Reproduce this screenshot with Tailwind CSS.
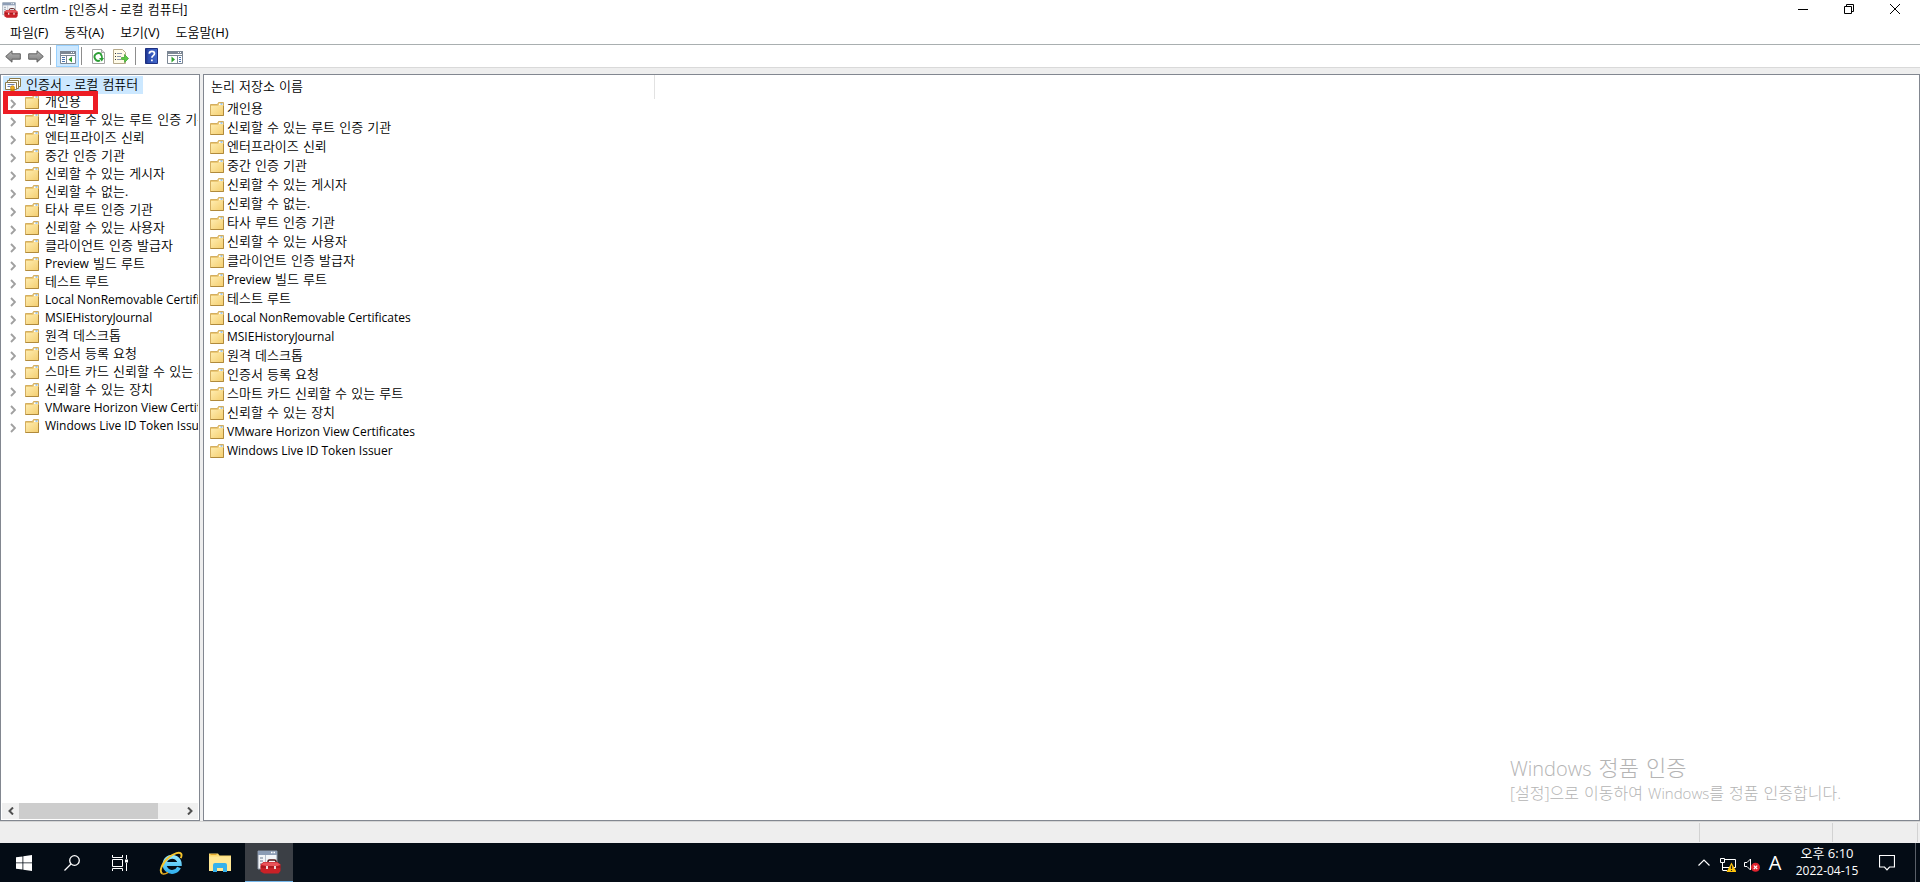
<!DOCTYPE html>
<html lang="ko">
<head>
<meta charset="utf-8">
<title>certlm - [인증서 - 로컬 컴퓨터]</title>
<script src="https://cdn.jsdelivr.net/npm/@tailwindcss/browser@4"></script>
</head>
<body class="flex h-screen flex-col overflow-hidden bg-white font-['DejaVu_Sans','Noto_Sans_CJK_KR',sans-serif] text-[13px] leading-[18px] font-[350] text-black">

<svg class="absolute size-0" aria-hidden="true">
  <defs>
    <linearGradient id="fold" x1="0" y1="0" x2="1" y2="1"><stop offset="0" stop-color="#ffedb0"/><stop offset="1" stop-color="#f4cf72"/></linearGradient>
    <linearGradient id="arrow" x1="0" y1="0" x2="0" y2="1"><stop offset="0" stop-color="#b5b5b5"/><stop offset="1" stop-color="#7d7d7d"/></linearGradient>
    <linearGradient id="ie" x1="0" y1="0" x2="0" y2="1"><stop offset="0" stop-color="#8fe6ff"/><stop offset="1" stop-color="#36b4f0"/></linearGradient>
    <linearGradient id="helpbg" x1="0" y1="0" x2="1" y2="0"><stop offset="0" stop-color="#1c2f86"/><stop offset=".25" stop-color="#2d4db0"/><stop offset="1" stop-color="#4268cc"/></linearGradient>
  </defs>
  <symbol id="folder" viewBox="0 0 14 14">
    <path d="M.5 2.500h7l1-2h5v13H.5z" fill="#ecc975" stroke="#d3ae60"/>
    <path d="M9 1.500h4v1.500H9z" fill="#fff"/><path d="M10.500 1.500h2v1h-2z" fill="#4f9be0"/>
    <path d="M1 4h7l1-1h4v10H1z" fill="url(#fold)"/>
    <path d="M.5 13.500h13V4" fill="none" stroke="#b08a3c"/>
  </symbol>
  <symbol id="chev" viewBox="0 0 6 10"><path d="M1 1l4 4-4 4" fill="none" stroke="#a0a0a0" stroke-width="1.900"/></symbol>
  <symbol id="console" viewBox="0 0 24 24">
    <path d="M1 1h19v18H1z" fill="#f3f5f8" stroke="#8b95a5"/>
    <path d="M1 1h19v4H1z" fill="#8d9db5"/><path d="M14 2.500h1.500M16.500 2.500H18" stroke="#fff" stroke-width="1.500"/>
    <path d="M3 8h3M3 11h3M3 14h3" stroke="#6f7c90"/><path d="M8.500 5v14" stroke="#b8c0cc"/>
    <path d="M11 13v-1.500q0-1.500 1.500-1.500h5q1.500 0 1.500 1.500V13" fill="none" stroke="#4d1111" stroke-width="1.500"/>
    <path d="M3.500 14.500l3-2.500h14l3 2.500v6.500l-2 2.500H7l-3.500-2z" fill="#c92127"/>
    <path d="M4 14.500l3-2h13l3.500 2-3 1.500H9z" fill="#e8545a"/>
    <path d="M3.500 17h20" stroke="#8e1318"/><path d="M9 16h2v3H9zM17 16h2v3h-2z" fill="#f1d9d9"/>
  </symbol>
  <symbol id="certs" viewBox="0 0 16 14">
    <path d="M4.500.5h11v8h-11z" fill="#fffdf3" stroke="#8c7a4a"/><path d="M2.500 2.500h11v8h-11z" fill="#fffdf3" stroke="#8c7a4a"/>
    <path d="M.5 4.500h11v7H.5z" fill="#fff" stroke="#8c7a4a"/><path d="M2.500 6.500h7M2.500 8.500h3" stroke="#6b7fb0"/>
    <path d="M6 10l-1 4 2.500-1 2.500 1-1-4z" fill="#c98a10"/><circle cx="7.500" cy="9.800" r="2" fill="#f2b01e" stroke="#b97a0a" stroke-width=".7"/>
  </symbol>
  <symbol id="left" viewBox="0 0 16 13"><path d="M.7 6.500L7 .8v3h8.300v5.400H7v3z" fill="url(#arrow)" stroke="#5f5f5f"/></symbol>
</svg>

<header class="shrink-0">
  <div class="flex h-[22px] items-start">
    <svg class="mt-0.5 ml-0.5 size-4"><use href="#console"/></svg>
    <h1 class="ml-[5px] flex-1 leading-[18px]"><span class="font-['Open_Sans'] text-xs font-normal">certlm - [</span>인증서<span class="font-['Open_Sans'] font-normal"> - </span>로컬 컴퓨터<span class="font-['Open_Sans'] text-xs font-normal">]</span></h1>
    <button class="flex h-[18px] w-[46px] items-center justify-center" aria-label="최소화"><svg class="size-2.5" viewBox="0 0 10 10"><path d="M0 5.500h10" stroke="#000"/></svg></button>
    <button class="flex h-[18px] w-[46px] items-center justify-center" aria-label="이전 크기로"><svg class="size-2.5" viewBox="0 0 10 10" fill="none" stroke="#000"><path d="M.5 2.500h7v7h-7zM2.500 2.500v-2h7v7h-2"/></svg></button>
    <button class="flex h-[18px] w-[46px] items-center justify-center" aria-label="닫기"><svg class="size-2.5" viewBox="0 0 10 10" stroke="#000"><path d="M0 0l10 10M10 0L0 10"/></svg></button>
    <span class="w-0.5"></span>
  </div>
  <nav class="flex h-[22px] items-start gap-4 pt-px pl-2.5">
    <button>파일<span class="font-['Open_Sans'] font-normal">(F)</span></button>
    <button>동작<span class="font-['Open_Sans'] font-normal">(A)</span></button>
    <button>보기<span class="font-['Open_Sans'] font-normal">(V)</span></button>
    <button>도움말<span class="font-['Open_Sans'] font-normal">(H)</span></button>
  </nav>
  <div class="flex h-6 items-center border-y border-t-[#a9afb0] border-b-[#d9d9d9] pl-[5px]">
    <button aria-label="뒤로"><svg class="h-[13px] w-4"><use href="#left"/></svg></button>
    <button class="ml-[7px] -scale-x-100" aria-label="앞으로"><svg class="h-[13px] w-4"><use href="#left"/></svg></button>
    <span class="ml-1.5 h-[18px] w-px bg-[#8d8d8d]"></span>
    <button class="ml-[5px] flex h-[22px] w-[23px] items-center justify-center border border-[#99d1ff] bg-[#cce8ff]" aria-label="콘솔 트리 표시">
      <svg class="mt-0.5 h-[13px] w-4" viewBox="0 0 16 13"><path d="M.5.500h15v12H.5z" fill="#fff" stroke="#7c8794"/><path d="M0 0h16v3H0z" fill="#7c8794"/><path d="M11 1.500h1M13 1.500h1" stroke="#fff"/><path d="M0 4.500h16M6.500 4v9" stroke="#7c8794"/><path d="M2 6.500h3M2 8.500h3M2 10.500h3" stroke="#4a74b0"/><path d="M12 5.500v6L8.500 8.500z" fill="#2ea22e"/></svg>
    </button>
    <span class="ml-0.5 h-[18px] w-px bg-[#8d8d8d]"></span>
    <button class="ml-2.5" aria-label="새로 고침"><svg class="h-[15px] w-[13px]" viewBox="0 0 13 15"><path d="M.5.500h9l3 3v11H.5z" fill="#fff" stroke="#a5a5a5"/><path d="M9.500.500v3h3" fill="#ddd" stroke="#a5a5a5"/><path d="M9.500 5.800A3.800 3.800 0 1 0 8 11.400" fill="none" stroke="#2c9e35" stroke-width="1.900"/><path d="M7 9h5L9.800 12.500z" fill="#2c9e35"/><path d="M8.500 5.200q1.800 1.200 1.500 4" fill="none" stroke="#2c9e35" stroke-width="1.700"/></svg></button>
    <button class="ml-2" aria-label="목록 내보내기"><svg class="h-[15px] w-4" viewBox="0 0 16 15"><path d="M.5.500h9l3 3v11H.5z" fill="#fffbe8" stroke="#b5a98a"/><path d="M2 4.500h1M2 7.500h1M2 10.500h1" stroke="#333"/><path d="M4 4.500h5M4 7.500h4M4 10.500h4" stroke="#8a93a8"/><path d="M8.500 8.500h3V5.500l4 4-4 4v-3h-3z" fill="#5cc845" stroke="#3a9e2c" stroke-width=".7"/></svg></button>
    <span class="ml-1.5 h-[18px] w-px bg-[#8d8d8d]"></span>
    <button class="ml-[9px]" aria-label="도움말"><svg class="h-4 w-[13px]" viewBox="0 0 13 16"><path d="M.5.500h12v15H.5z" fill="url(#helpbg)" stroke="#1d2f80"/><path d="M4.300 5.800q0-2.500 2.600-2.500t2.600 2.200q0 1.300-1.300 2.100-1.300.8-1.300 2.200M6.900 11.500v1.800" fill="none" stroke="#fff" stroke-width="1.700"/></svg></button>
    <button class="mt-0.5 ml-[9px]" aria-label="작업 창 표시"><svg class="h-[13px] w-4" viewBox="0 0 16 13"><path d="M.5.500h15v12H.5z" fill="#fff" stroke="#7c8794"/><path d="M0 0h16v3H0z" fill="#7c8794"/><path d="M11 1.500h1M13 1.500h1" stroke="#fff"/><path d="M0 4.500h16M10.500 4v9" stroke="#7c8794"/><path d="M12 6.500h2M12 8.500h2M12 10.500h2" stroke="#4a74b0"/><path d="M4.500 5.500v6L8 8.500z" fill="#2ea22e"/></svg></button>
  </div>
</header>

<main class="relative flex min-h-0 flex-1 gap-[3px] bg-[#eee] pt-1.5">
  <aside class="flex w-[200px] shrink-0 flex-col border border-[#828790] bg-white px-px pb-px">
    <div class="min-h-0 flex-1 overflow-hidden pt-px">
      <div class="ml-px flex h-[18px] w-[140px] items-start bg-[#cce8ff] pl-0.5 leading-4 whitespace-nowrap">
        <svg class="mt-0.5 mr-[5px] h-3.5 w-4 shrink-0"><use href="#certs"/></svg><span>인증서 <span class="font-['Open_Sans'] font-normal">-</span> 로컬 컴퓨터</span>
      </div>
      <ul id="tree" class="-mt-px"></ul>
    </div>
    <div class="flex h-4 items-center bg-[#f0f0f0]">
      <button class="flex w-[17px] justify-center" aria-label="왼쪽으로 스크롤"><svg class="h-2 w-1.5" viewBox="0 0 6 8"><path d="M5 .5L1.500 4 5 7.500" fill="none" stroke="#505050" stroke-width="2"/></svg></button>
      <span class="h-4 w-[139px] bg-[#cdcdcd]"></span><span class="flex-1"></span>
      <button class="flex w-[17px] justify-center" aria-label="오른쪽으로 스크롤"><svg class="h-2 w-1.5" viewBox="0 0 6 8"><path d="M1 .5L4.500 4 1 7.500" fill="none" stroke="#505050" stroke-width="2"/></svg></button>
    </div>
  </aside>
  <section class="min-w-0 flex-1 border border-[#828790] bg-white">
    <div class="flex h-6 w-[451px] border-r border-[#e2e2e2] pt-[3px] pl-[7px]">논리 저장소 이름</div>
    <ul id="list"></ul>
  </section>
  <div class="absolute top-[23px] left-[3px] h-[23px] w-[95px] border-[5px] border-[#ed1c24] border-b-[4px]"></div>
  <div class="absolute right-[79px] bottom-[17px] font-light text-[#b4b4b4] whitespace-nowrap">
    <p class="text-[22px] leading-[22px]"><span class="font-['Open_Sans'] text-xl">Windows</span> 정품 인증</p>
    <p class="text-base leading-5"><span class="font-['Open_Sans']">[</span>설정<span class="font-['Open_Sans']">]</span>으로 이동하여 <span class="font-['Open_Sans'] text-[15px]">Windows</span>를 정품 인증합니다<span class="font-['Open_Sans']">.</span></p>
  </div>
</main>

<div class="flex h-[22px] shrink-0 justify-end border-t border-[#d5d5d5] bg-[#eee] pt-px pr-0.5 pb-px">
  <span class="w-[133px] border-l border-[#d2d2d2]"></span><span class="w-[86px] border-x border-[#d2d2d2]"></span>
</div>

<footer class="flex h-[39px] shrink-0 items-stretch bg-[#040c15] font-['Open_Sans','Noto_Sans_CJK_KR',sans-serif] text-white">
  <button class="flex w-12 items-center justify-center" aria-label="시작"><svg class="size-4" viewBox="0 0 16 16" fill="#fff"><path d="M0 2.300l6.500-.9v6.100H0zM7.300 1.300L16 0v7.500H7.300zM0 8.300h6.500v6.300L0 13.700zM7.300 8.300H16V16l-8.700-1.300z"/></svg></button>
  <button class="flex w-12 items-center justify-center" aria-label="검색"><svg class="size-4" viewBox="0 0 16 16" fill="none" stroke="#fff" stroke-width="1.300"><circle cx="10.500" cy="5.500" r="4.800"/><path d="M7 9L.5 15.500"/></svg></button>
  <button class="flex w-12 items-center justify-center" aria-label="작업 보기"><svg class="size-4" viewBox="0 0 16 16" fill="none" stroke="#fff"><path d="M.5 0v2.500h10V0M.5 16v-2.500h10V16M.5 4.500h10v7H.5zM14.500 0v4M14.500 8v8"/><path d="M13 4.500h3v3h-3z" fill="#fff" stroke="none"/></svg></button>
  <button class="ml-[3px] flex w-12 items-center justify-center" aria-label="Internet Explorer"><svg class="size-6" viewBox="0 0 24 24" fill="none"><path d="M20 16.500A7.600 7.600 0 1 1 20.700 13H7" stroke="url(#ie)" stroke-width="4"/><path d="M3.500 22.800C-.5 20.500 3 12 10 6.300 15 2.200 21 .3 22.300 3c.6 1.300.1 2.800-.6 4.200" stroke="#f6c52c" stroke-width="1.900"/><path d="M3.500 22.800c1.500.6 3.500 0 5.500-1.400" stroke="#e7a91c" stroke-width="1.500"/></svg></button>
  <button class="ml-px flex w-12 items-center justify-center" aria-label="파일 탐색기"><svg class="h-[19px] w-[22px]" viewBox="0 0 22 19"><path d="M0 .5h9l1.500 2H22V18H0z" fill="#fbd96e"/><path d="M0 3.500h22V18H0z" fill="#ffe794"/><path d="M1.500 1.500h6" stroke="#e0a62c"/><path d="M4 19v-7q0-2 2-2h10q2 0 2 2v7h-4v-4H8v4z" fill="#35b1ec"/></svg></button>
  <button class="ml-px flex w-12 items-center justify-center border-b border-[#76b9ed] bg-[#3b3f45]" aria-label="certlm"><svg class="size-6"><use href="#console"/></svg></button>
  <div class="flex-1"></div>
  <button class="flex w-6 items-center justify-center" aria-label="숨겨진 아이콘 표시"><svg class="h-[7px] w-3" viewBox="0 0 12 7"><path d="M.5 6.500L6 1l5.500 5.500" fill="none" stroke="#fff" stroke-width="1.200"/></svg></button>
  <button class="flex w-6 items-center justify-center" aria-label="네트워크"><svg class="mt-1 h-3.5 w-4" viewBox="0 0 16 14"><path d="M5 1.500h10.500v8H5M.5.500h4v4h-4zM2.500 4.500v8M2.500 9.500h3M3 12.500h4" fill="none" stroke="#fff"/><path d="M11.500 4.500l5 9.500H6.500z" fill="#ffc40c"/><path d="M11.500 7.500v3.500M11.500 12v1" stroke="#222" stroke-width="1.200"/></svg></button>
  <button class="flex w-6 items-center justify-center" aria-label="스피커"><svg class="mt-1 h-3.5 w-4" viewBox="0 0 16 14"><path d="M.5 4.500h2.500L6.500 1v11L3 8.500H.500z" fill="none" stroke="#fff"/><circle cx="11.500" cy="9.300" r="4.500" fill="#e0232e"/><path d="M9.800 7.600l3.400 3.400M13.200 7.600l-3.400 3.400" stroke="#fff" stroke-width="1.200"/></svg></button>
  <button class="w-[22px] text-center text-xl leading-[39px] font-normal" aria-label="입력 표시기">A</button>
  <button class="flex w-[82px] flex-col items-center pt-px leading-[18px] font-normal"><time>오후 6:10</time><time class="text-xs leading-[18px]">2022-04-15</time></button>
  <button class="flex w-[38px] items-center justify-center" aria-label="알림 센터"><svg class="size-4" viewBox="0 0 16 16"><path d="M.5.500h15v11.500H10.500L8 14.800 5.500 12H.500z" fill="none" stroke="#fff" stroke-width="1.200"/></svg></button>
  <button class="ml-[9px] w-[5px] border-l border-[#5a6068]" aria-label="바탕 화면 보기"></button>
</footer>

<script>
  const stores = ['개인용','신뢰할 수 있는 루트 인증 기관','엔터프라이즈 신뢰','중간 인증 기관','신뢰할 수 있는 게시자','신뢰할 수 없는.','타사 루트 인증 기관','신뢰할 수 있는 사용자','클라이언트 인증 발급자','Preview 빌드 루트','테스트 루트','Local NonRemovable Certificates','MSIEHistoryJournal','원격 데스크톱','인증서 등록 요청','스마트 카드 신뢰할 수 있는 루트','신뢰할 수 있는 장치','VMware Horizon View Certificates','Windows Live ID Token Issuer'];
  const label = s => s.replace(/[A-Za-z.]+( [A-Za-z]+)*/g, `<span class="font-['Open_Sans'] text-xs font-normal">$&</span>`);
  document.getElementById('tree').innerHTML = stores.map(s => `<li class="flex h-[18px] items-center whitespace-nowrap pl-2"><button class="mt-1 mr-[9px] flex" aria-label="확장"><svg class="h-2.5 w-1.5"><use href="#chev"/></svg></button><svg class="mr-1.5 size-3.5 shrink-0"><use href="#folder"/></svg><span class="leading-[18px]">${label(s)}</span></li>`).join('');
  document.getElementById('list').innerHTML = stores.map(s => `<li class="flex h-[19px] items-center whitespace-nowrap pl-1.5"><svg class="mr-[3px] size-3.5 shrink-0"><use href="#folder"/></svg><span>${label(s)}</span></li>`).join('');
</script>
</body>
</html>
